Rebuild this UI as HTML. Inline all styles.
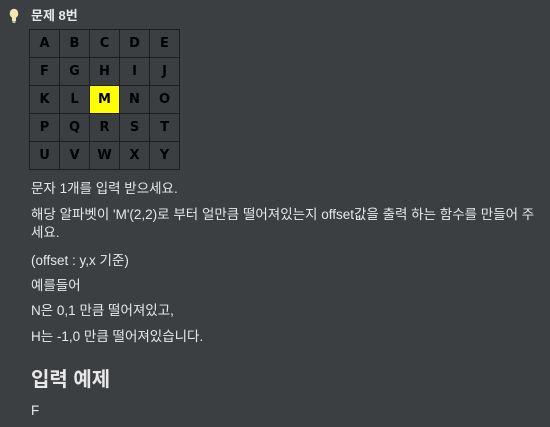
<!DOCTYPE html>
<html><head><meta charset="utf-8"><style>
html,body{margin:0;padding:0;background:#3b3f42;width:550px;height:427px;overflow:hidden}
body{font-family:"Liberation Sans","Noto Sans CJK KR",sans-serif;color:#e8e8e8;font-size:13.5px;position:relative}
.a{position:absolute;left:31px;white-space:nowrap;line-height:16px}
table{position:absolute;left:29px;top:29px;border-collapse:collapse}
td{width:29px;height:27px;border:1px solid #1c1e20;text-align:center;color:#000 !important;font-size:13px;padding:0;font-family:"DejaVu Sans",sans-serif;font-weight:bold}
td.m{background:#ffff00}
</style></head><body>
<svg style="position:absolute;left:8px;top:8px" width="12" height="16" viewBox="0 0 12 16"><ellipse cx="6" cy="5.5" rx="4.3" ry="4.8" fill="#f3e7b0"/><rect x="4" y="9" width="4" height="4" fill="#f3e7b0"/><rect x="4.5" y="13" width="3" height="2" fill="#bba"/></svg>
<div class="a" style="top:8px;font-weight:bold;font-size:13px">문제 8번</div>
<table>
<tr><td>A</td><td>B</td><td>C</td><td>D</td><td>E</td></tr>
<tr><td>F</td><td>G</td><td>H</td><td>I</td><td>J</td></tr>
<tr><td>K</td><td>L</td><td class="m">M</td><td>N</td><td>O</td></tr>
<tr><td>P</td><td>Q</td><td>R</td><td>S</td><td>T</td></tr>
<tr><td>U</td><td>V</td><td>W</td><td>X</td><td>Y</td></tr>
</table>
<div class="a" style="top:181px">문자 1개를 입력 받으세요.</div>
<div class="a" style="top:207px">해당 알파벳이 'M'(2,2)로 부터 얼만큼 떨어져있는지 offset값을 출력 하는 함수를 만들어 주</div>
<div class="a" style="top:225px">세요.</div>
<div class="a" style="top:253px">(offset : y,x 기준)</div>
<div class="a" style="top:278px">예를들어</div>
<div class="a" style="top:303px">N은 0,1 만큼 떨어져있고,</div>
<div class="a" style="top:329px">H는 -1,0 만큼 떨어져있습니다.</div>
<div class="a" style="top:368px;font-size:20px;font-weight:bold;line-height:24px">입력 예제</div>
<div class="a" style="top:403px">F</div>
</body></html>
